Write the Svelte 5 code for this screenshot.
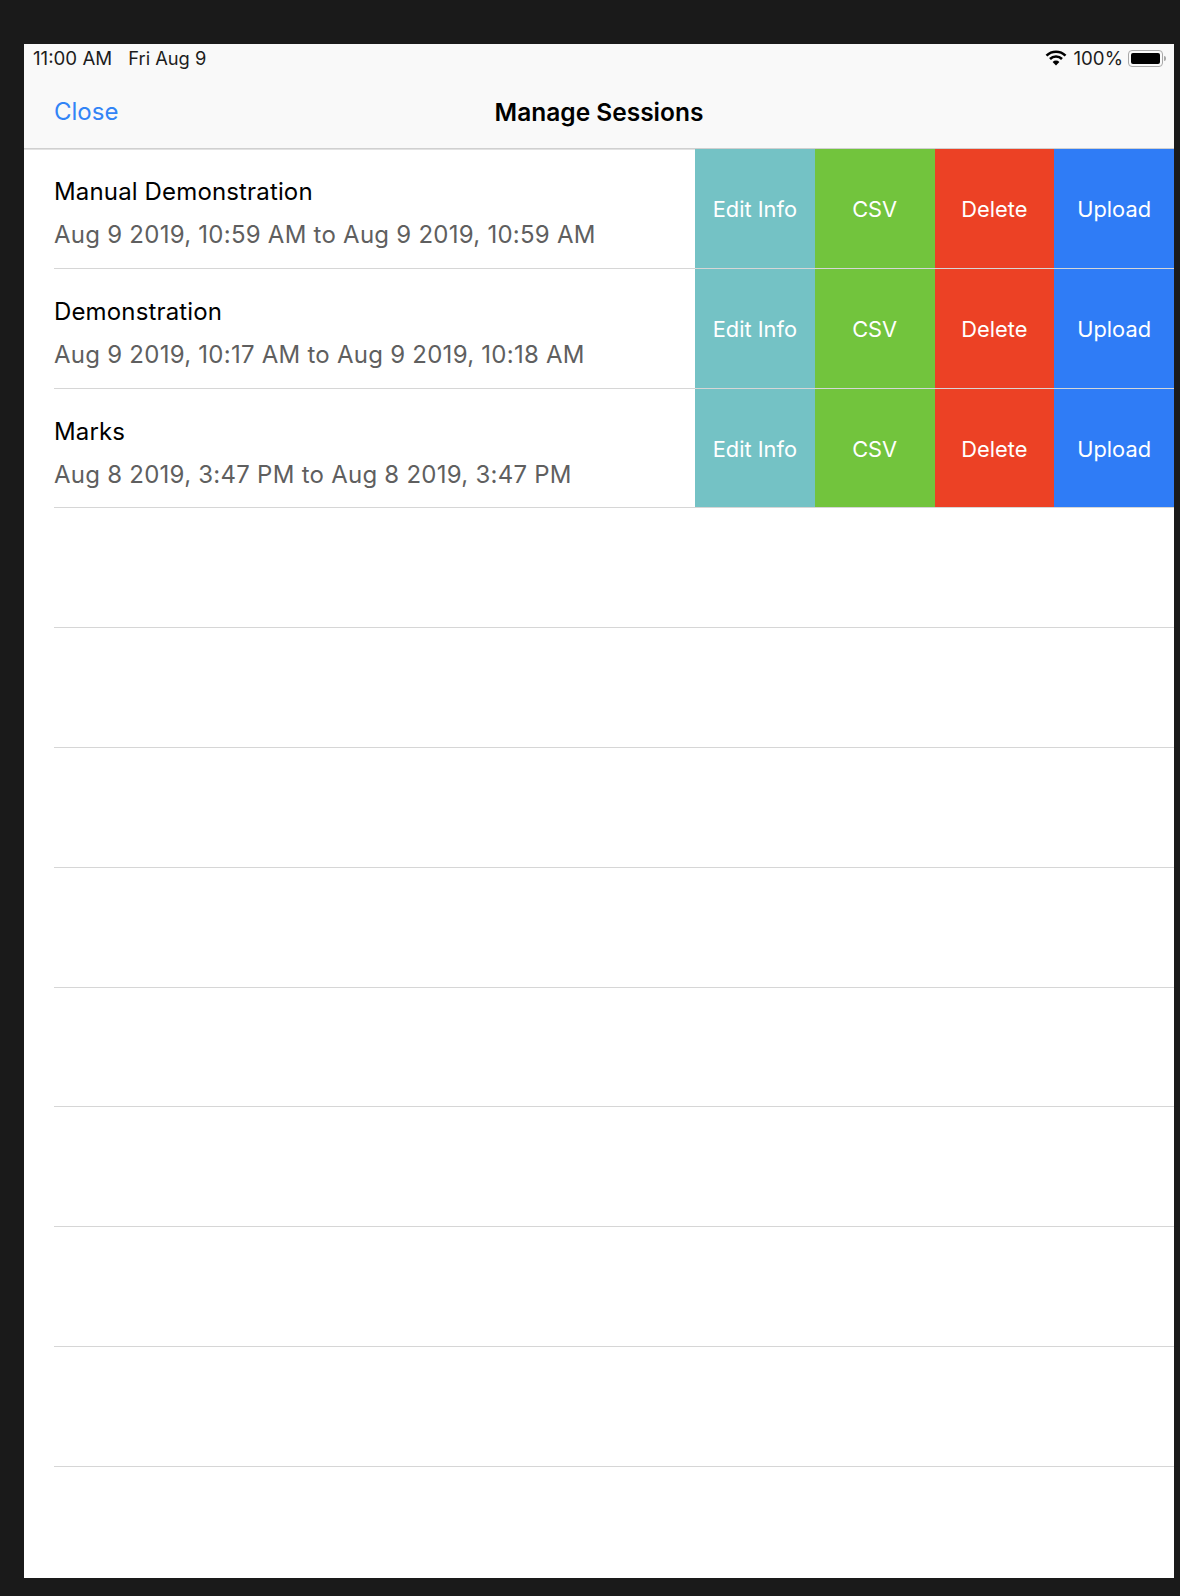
<script>
  const sessions = [
    { name: 'Manual Demonstration', range: 'Aug 9 2019, 10:59 AM to Aug 9 2019, 10:59 AM' },
    { name: 'Demonstration', range: 'Aug 9 2019, 10:17 AM to Aug 9 2019, 10:18 AM' },
    { name: 'Marks', range: 'Aug 8 2019, 3:47 PM to Aug 8 2019, 3:47 PM' }
  ];
  const actions = [
    { label: 'Edit Info', kind: 'edit' },
    { label: 'CSV', kind: 'csv' },
    { label: 'Delete', kind: 'delete' },
    { label: 'Upload', kind: 'upload' }
  ];
  const emptyRows = Array(8).fill(0);
</script>

<div class="screen">
  <header class="top">
    <div class="status">
      <span class="clock">11:00 AM</span>
      <span class="date">Fri Aug 9</span>
      <span class="spacer"></span>
      <svg class="wifi" width="22" height="16" viewBox="0 0 22 16" aria-hidden="true">
        <path d="M1.5 5.6 A13.6 13.6 0 0 1 20.5 5.6" fill="none" stroke="#000" stroke-width="2.6"/>
        <path d="M5 9 A8.6 8.6 0 0 1 17 9" fill="none" stroke="#000" stroke-width="2.6"/>
        <path d="M11 15.5 L7.6 11.9 A4.9 4.9 0 0 1 14.4 11.9 Z" fill="#000"/>
      </svg>
      <span class="pct">100%</span>
      <div class="battery"><div class="charge"></div></div>
      <div class="nub"></div>
    </div>
    <nav class="bar">
      <span class="close">Close</span>
      <span class="title">Manage Sessions</span>
    </nav>
  </header>

  <div class="list">
    {#each sessions as s}
      <div class="row">
        <div class="info">
          <div class="name">{s.name}</div>
          <div class="range">{s.range}</div>
        </div>
        {#each actions as a}
          <div class="action {a.kind}">{a.label}</div>
        {/each}
      </div>
    {/each}
    {#each emptyRows as _}
      <div class="row"></div>
    {/each}
  </div>
</div>

<style>
  :global(body) {
    background: #1a1a1a;
  }

  .screen {
    width: 1150px;
    height: 1534px;
    margin: 44px 0 18px 24px;
    background: #fff;
    font-family: Inter, "Liberation Sans", sans-serif;
    overflow: hidden;
  }

  .top {
    background: #f9f9f9;
    border-bottom: 1px solid #d0d0d0;
    box-shadow: 0 1px 0 #e2e2e2;
    height: 104px;
  }

  .status {
    display: flex;
    align-items: center;
    height: 28px;
    padding: 0 8px 0 9px;
    font-size: 18.7px;
    color: #1c1c1c;
  }

  .date {
    margin-left: 16px;
    font-size: 18.3px;
  }

  .spacer {
    flex: 1;
  }

  .pct {
    margin-left: 6px;
  }

  .battery {
    width: 35px;
    height: 17px;
    margin-left: 5px;
    padding: 2px;
    box-sizing: border-box;
    border: 1.5px solid #a8a8a8;
    border-radius: 4px;
  }

  .charge {
    height: 100%;
    background: #000;
    border-radius: 2px;
  }

  .nub {
    width: 2px;
    height: 5px;
    margin-left: 1px;
    background: #a8a8a8;
    border-radius: 0 2px 2px 0;
  }

  .bar {
    display: flex;
    align-items: center;
    justify-content: center;
    position: relative;
    box-sizing: border-box;
    height: 76px;
    padding-top: 3px;
  }

  .close {
    position: absolute;
    left: 30px;
    font-size: 24px;
    color: #3284f6;
  }

  .title {
    font-size: 24.5px;
    font-weight: 600;
    color: #000;
  }

  .list {
    margin-left: 30px;
  }

  .row {
    display: flex;
    height: 118.8px;
    border-bottom: 1px solid #d6d6d6;
  }

  .info {
    flex: 1;
    display: flex;
    flex-direction: column;
    justify-content: center;
    gap: 14px;
    padding-top: 10px;
  }

  .name {
    font-size: 24px;
    line-height: 29px;
    letter-spacing: 0.15px;
    color: #000;
  }

  .range {
    font-size: 24px;
    line-height: 29px;
    letter-spacing: 0.25px;
    color: #5f5f5f;
  }

  .action {
    width: 119.75px;
    display: flex;
    align-items: center;
    justify-content: center;
    box-sizing: border-box;
    padding-top: 2px;
    font-size: 21.8px;
    color: #fff;
  }

  .edit { background: #74c2c5; }
  .csv { background: #72c43d; }
  .delete { background: #ec4125; }
  .upload { background: #2f7cf6; }
</style>
